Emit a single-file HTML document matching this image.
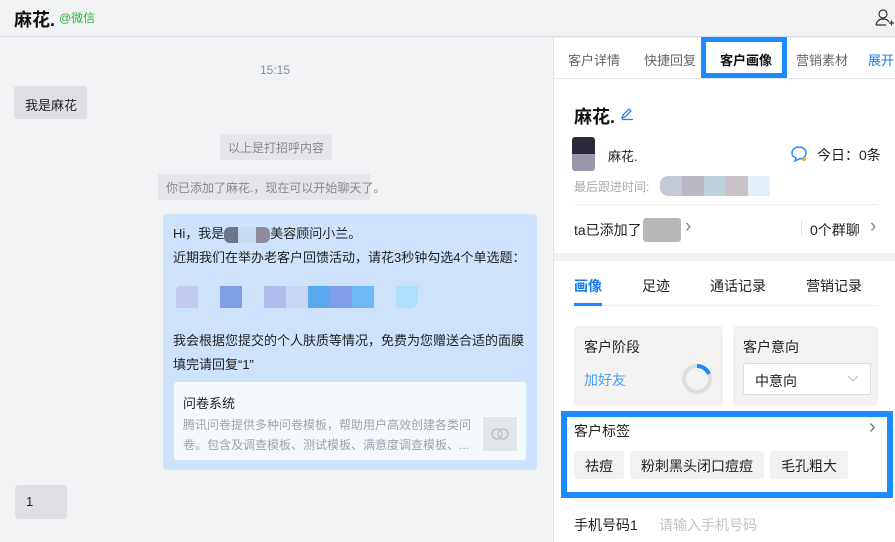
<!DOCTYPE html>
<html><head><meta charset="utf-8"><style>
*{margin:0;padding:0;box-sizing:border-box}
body{width:895px;height:542px;overflow:hidden;background:#f1f2f4;font-family:"Liberation Sans","Noto Sans CJK SC",sans-serif;font-size:13px;color:#222;position:relative}
.a{position:absolute;white-space:nowrap}
.g{color:#999}
</style></head><body>
<div class="a" style="left:0;top:0;width:895px;height:37px;background:#f1f2f4;border-bottom:1px solid #dcdde0"></div>
<div class="a" style="left:14px;top:6px;font-size:18px;font-weight:bold;color:#111">麻花.</div>
<div class="a" style="left:59px;top:9px;font-size:12px;color:#2fb344">@微信</div>
<svg class="a" style="left:874px;top:8px" width="22" height="20" viewBox="0 0 22 20"><circle cx="9" cy="6" r="4" fill="none" stroke="#333" stroke-width="1.2"/><path d="M2 17c1-5 4-6 7-6s5 1 6 3M2 17h10" fill="none" stroke="#333" stroke-width="1.2"/><path d="M15 15h5M17.5 12.5v5" stroke="#333" stroke-width="1.2"/></svg>

<div class="a g" style="left:260px;top:63px;font-size:12px;color:#8a9199">15:15</div>
<div class="a" style="left:14px;top:86px;width:73px;height:33px;background:#dfe0e3;border-radius:3px;padding:9px 0 0 11px">我是麻花</div>
<div class="a" style="left:220px;top:134px;width:112px;height:26px;background:#e4e6e9;font-size:12px;color:#888;padding:5px 0 0 8px">以上是打招呼内容</div>
<div class="a" style="left:158px;top:174px;width:212px;height:26px;background:#e4e6e9;font-size:12px;color:#888;padding:5px 0 0 8px">你已添加了麻花.，现在可以开始聊天了。</div>
<div class="a" style="left:163px;top:214px;width:374px;height:256px;background:#cde2fb;border-radius:4px"></div>
<div class="a" style="left:173px;top:222px;line-height:24px">Hi，我是<span style="display:inline-block;width:46px;height:16px;vertical-align:middle;background:linear-gradient(90deg,#6b7488 30%,#c6dcf2 30%,#c6dcf2 70%,#8e8b9a 70%);border-radius:6px"></span>美容顾问小兰。<br>近期我们在举办老客户回馈活动，请花3秒钟勾选4个单选题：</div>
<div class="a" style="left:176px;top:286px;width:242px;height:22px;background:linear-gradient(90deg,#c3c9ef 0 22px,#cde2fb 22px 44px,#7e9ee6 44px 66px,#cde2fb 66px 88px,#b2bbeb 88px 110px,#c8d6f4 110px 132px,#5aa8ee 132px 154px,#7f9de8 154px 176px,#6fbaf5 176px 198px,#cde2fb 198px 220px,#aee0fb 220px 242px);border-radius:4px 0 8px 0"></div>
<div class="a" style="left:173px;top:329px;line-height:24px">我会根据您提交的个人肤质等情况，免费为您赠送合适的面膜<br>填完请回复“1”</div>
<div class="a" style="left:174px;top:382px;width:352px;height:78px;background:#f5f9fe;border-radius:3px"></div>
<div class="a" style="left:183px;top:393px">问卷系统</div>
<div class="a" style="left:183px;top:415px;font-size:12px;color:#a0a4aa;line-height:20px">腾讯问卷提供多种问卷模板，帮助用户高效创建各类问<br>卷。包含及调查模板、测试模板、满意度调查模板、...</div>
<div class="a" style="left:483px;top:417px;width:34px;height:34px;background:#e3e6ea;border-radius:2px"></div>
<svg class="a" style="left:489px;top:426px" width="22" height="16"><circle cx="8" cy="8" r="5" fill="none" stroke="#bfc4ca" stroke-width="1.5"/><circle cx="14" cy="8" r="5" fill="none" stroke="#bfc4ca" stroke-width="1.5"/></svg>
<div class="a" style="left:15px;top:485px;width:52px;height:34px;background:#dfe0e3;border-radius:3px;padding:9px 0 0 11px">1</div>

<div class="a" style="left:553px;top:38px;width:342px;height:504px;background:#fff;border-left:1px solid #e3e4e6"></div>
<div class="a" style="left:554px;top:78px;width:341px;height:1px;background:#e8e9eb"></div>
<div class="a" style="left:568px;top:50px;color:#666">客户详情</div>
<div class="a" style="left:644px;top:50px;color:#666">快捷回复</div>
<div class="a" style="left:701px;top:37px;width:86px;height:41px;border:5px solid #1a8cff"></div>
<div class="a" style="left:720px;top:50px;color:#111;font-weight:bold">客户画像</div>
<div class="a" style="left:796px;top:50px;color:#666">营销素材</div>
<div class="a" style="left:868px;top:50px;color:#1a7bf0">展开</div>

<div class="a" style="left:574px;top:103px;font-size:18px;font-weight:bold;color:#111">麻花.</div>
<svg class="a" style="left:620px;top:107px" width="14" height="14"><path d="M2 11l1-3 6-6 2 2-6 6z M2 12.5h11" fill="none" stroke="#1a7bf0" stroke-width="1.2"/></svg>
<div class="a" style="left:572px;top:137px;width:23px;height:34px;background:linear-gradient(#2b2a3a 50%,#9a98a8 50%);border-radius:3px"></div>
<div class="a" style="left:608px;top:146px">麻花.</div>
<svg class="a" style="left:790px;top:145px" width="18" height="18"><path d="M9 2c4 0 7 2.5 7 6s-3 6-7 6l-4 2 1-3C3 12 2 10 2 8c0-3.5 3-6 7-6z" fill="none" stroke="#1a8cff" stroke-width="1.4"/><circle cx="14" cy="14" r="2" fill="#f5a623"/></svg>
<div class="a" style="left:817px;top:145px;font-size:14px">今日：0条</div>
<div class="a" style="left:574px;top:178px;font-size:12px;color:#aaa">最后跟进时间:</div>
<div class="a" style="left:660px;top:176px;width:110px;height:20px;background:linear-gradient(90deg,#c4cad6 0 22px,#bcb8c3 22px 44px,#bcd3dc 44px 66px,#c9c2c6 66px 88px,#e2eff8 88px);border-radius:8px 0 0 8px"></div>
<div class="a" style="left:574px;top:204px;width:304px;height:1px;background:#eee"></div>
<div class="a" style="left:574px;top:220px;font-size:14px">ta已添加了</div>
<div class="a" style="left:643px;top:218px;width:38px;height:24px;background:#b8b8b8;border-radius:3px"></div>
<div class="a" style="left:685px;top:216px;color:#888;font-size:19px">›</div>
<div class="a" style="left:801px;top:221px;width:1px;height:14px;background:#ddd"></div>
<div class="a" style="left:810px;top:220px;font-size:14px">0个群聊</div>
<div class="a" style="left:870px;top:216px;color:#888;font-size:19px">›</div>
<div class="a" style="left:554px;top:253px;width:341px;height:8px;background:#f1f2f4"></div>

<div class="a" style="left:574px;top:276px;color:#1a7bf0;font-weight:bold;font-size:14px">画像</div>
<div class="a" style="left:642px;top:276px;font-size:14px">足迹</div>
<div class="a" style="left:710px;top:276px;font-size:14px">通话记录</div>
<div class="a" style="left:806px;top:276px;font-size:14px">营销记录</div>
<div class="a" style="left:574px;top:305px;width:304px;height:1px;background:#eee"></div>
<div class="a" style="left:574px;top:303px;width:28px;height:3px;background:#1a8cff"></div>

<div class="a" style="left:574px;top:326px;width:149px;height:80px;background:#f2f2f2;border-radius:4px"></div>
<div class="a" style="left:584px;top:337px;font-size:14px">客户阶段</div>
<div class="a" style="left:584px;top:370px;font-size:14px;color:#4ba0f5">加好友</div>
<svg class="a" style="left:680px;top:362px" width="34" height="34"><circle cx="17" cy="17" r="13" fill="none" stroke="#dedede" stroke-width="4"/><path d="M17 4a13 13 0 0 1 12 8" fill="none" stroke="#1a8cff" stroke-width="4"/></svg>
<div class="a" style="left:733px;top:326px;width:145px;height:80px;background:#f2f2f2;border-radius:4px"></div>
<div class="a" style="left:743px;top:337px;font-size:14px">客户意向</div>
<div class="a" style="left:743px;top:363px;width:128px;height:32px;background:#fff;border:1px solid #ddd;border-radius:2px"></div>
<div class="a" style="left:755px;top:371px;font-size:14px">中意向</div>
<svg class="a" style="left:847px;top:375px" width="12" height="8"><path d="M1 1l5 5 5-5" fill="none" stroke="#bbb"/></svg>

<div class="a" style="left:561px;top:411px;width:332px;height:87px;border:6px solid #1a8cff"></div>
<div class="a" style="left:574px;top:421px;font-size:14px">客户标签</div>
<div class="a" style="left:869px;top:416px;color:#777;font-size:20px">›</div>
<div class="a" style="left:574px;top:451px;width:50px;height:28px;background:#f2f2f2;border-radius:3px;font-size:14px;padding:5px 0 0 11px">祛痘</div>
<div class="a" style="left:630px;top:451px;width:134px;height:28px;background:#f2f2f2;border-radius:3px;font-size:14px;padding:5px 0 0 11px">粉刺黑头闭口痘痘</div>
<div class="a" style="left:770px;top:451px;width:78px;height:28px;background:#f2f2f2;border-radius:3px;font-size:14px;padding:5px 0 0 11px">毛孔粗大</div>
<div class="a" style="left:574px;top:500px;width:304px;height:1px;background:#eee"></div>
<div class="a" style="left:574px;top:515px;font-size:14px">手机号码1</div>
<div class="a" style="left:659px;top:515px;font-size:14px;color:#c3c3c3">请输入手机号码</div>
</body></html>
